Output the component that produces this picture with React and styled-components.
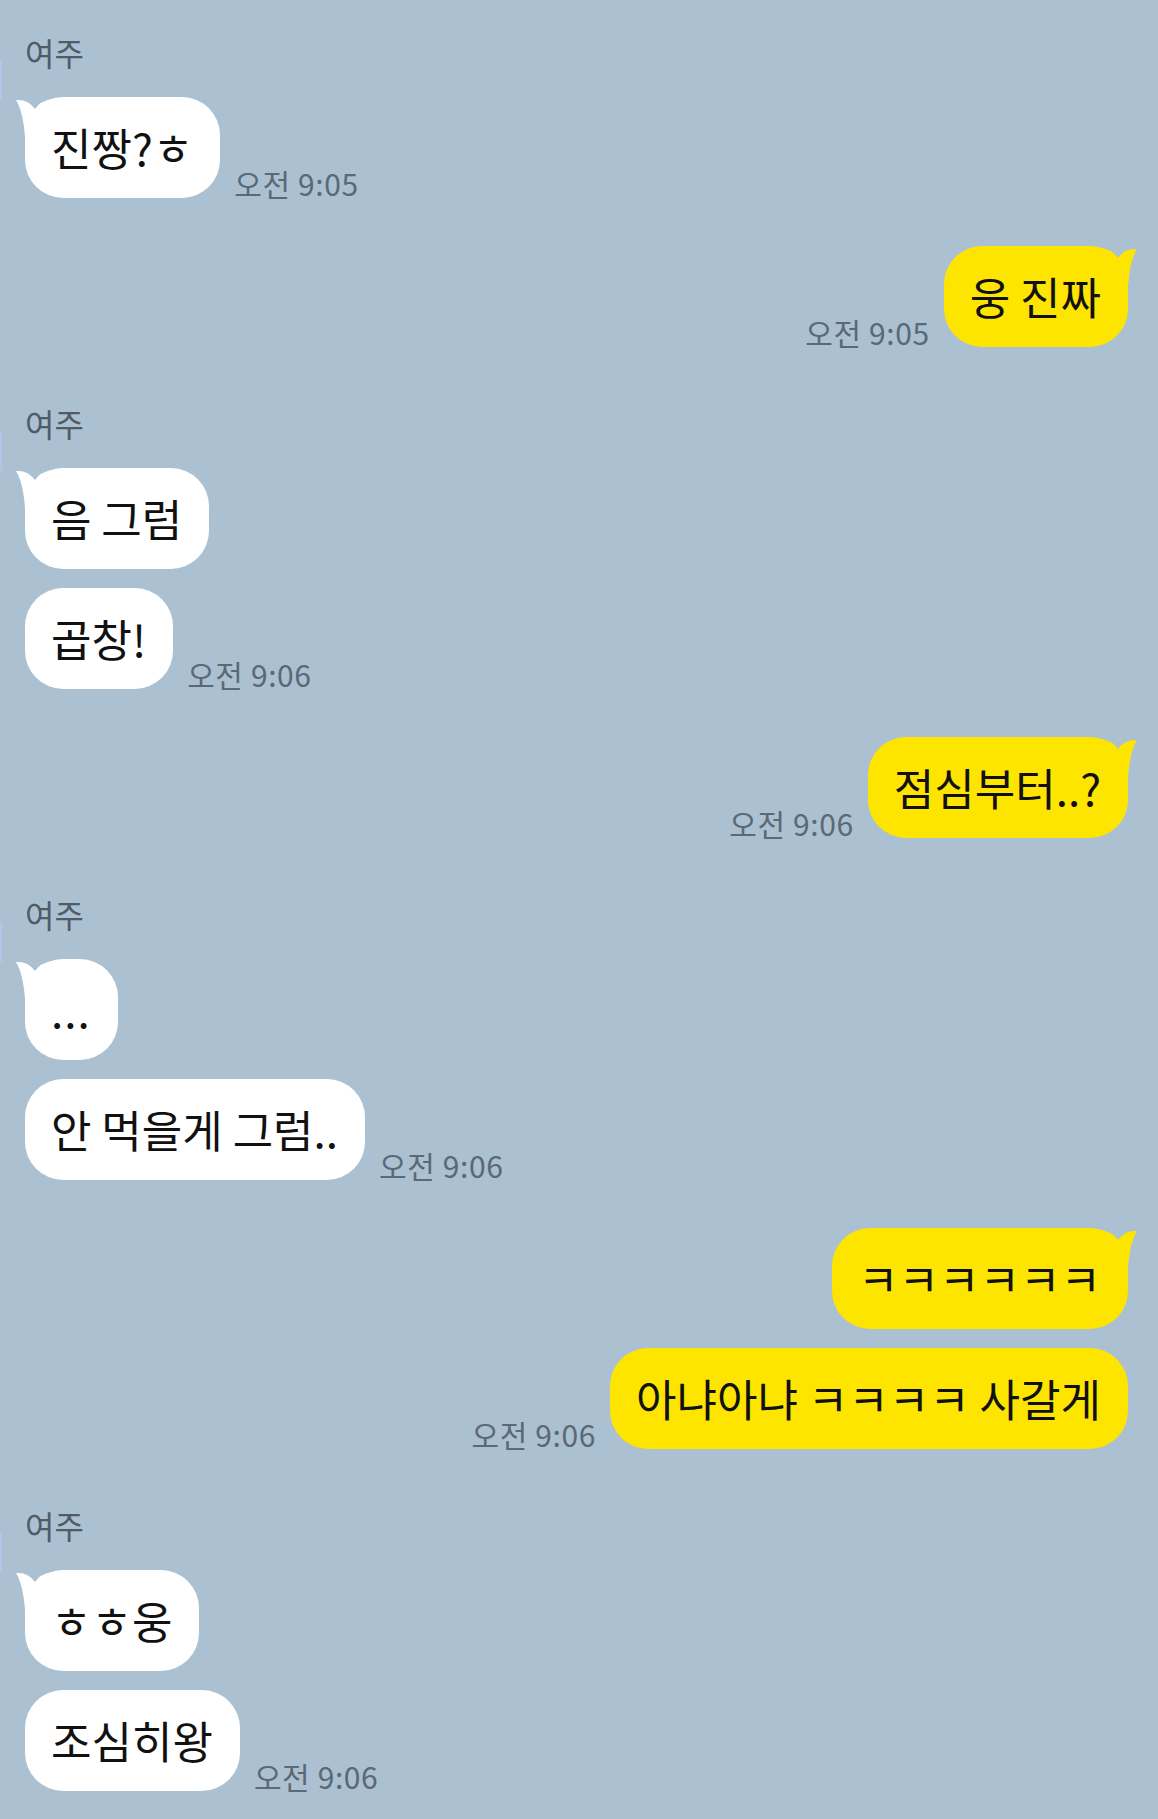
import styled, { createGlobalStyle } from "styled-components";

const GlobalStyle = createGlobalStyle`
  html, body {
    margin: 0;
    padding: 0;
    background: #abc1d1;
  }
  body {
    font-family: "Noto Sans CJK KR", "Noto Sans", sans-serif;
  }
`;

const Chat = styled.main`
  display: flex;
  flex-direction: column;
  min-height: 100vh;
  box-sizing: border-box;
  padding: 32px 30px 24px 25px;
`;

const Group = styled.section`
  position: relative;
  display: flex;
  flex-direction: column;
  align-items: ${({ $mine }) => ($mine ? "flex-end" : "flex-start")};
  margin-top: ${({ $mine }) => ($mine ? "48px" : "56px")};
  &:first-child {
    margin-top: 0;
  }
  ${({ $mine }) =>
    !$mine &&
    `
    &::before {
      content: "";
      position: absolute;
      left: -25px;
      top: 28px;
      width: 2px;
      height: 40px;
      background: #b7c2e6;
    }
  `}
`;

const Name = styled.div`
  font-size: 32px;
  line-height: 40px;
  color: #4f5b67;
  margin-bottom: 25px;
`;

const Stack = styled.div`
  display: flex;
  flex-direction: column;
  align-items: inherit;
  gap: 19px;
`;

const Row = styled.div`
  display: flex;
  flex-direction: ${({ $mine }) => ($mine ? "row-reverse" : "row")};
  align-items: flex-end;
  gap: 14px;
`;

const Bubble = styled.div`
  position: relative;
  background: ${({ $mine }) => ($mine ? "#fee500" : "#ffffff")};
  color: #111;
  border-radius: 38px;
  padding: 25px 27px 25px 26px;
  font-size: 44px;
  line-height: 51px;
  white-space: nowrap;
  letter-spacing: ${({ $spaced }) => ($spaced ? "1px" : "0")};
`;

const TailSvg = styled.svg`
  position: absolute;
  top: 0;
  ${({ $mine }) => ($mine ? "right: -9px;" : "left: -9px;")}
  width: 36px;
  height: 40px;
  transform: ${({ $mine }) => ($mine ? "scaleX(-1)" : "none")};
  fill: ${({ $mine }) => ($mine ? "#fee500" : "#ffffff")};
`;

const Time = styled.span`
  font-size: 30px;
  line-height: 30px;
  letter-spacing: 0.6px;
  color: #5b6876;
  margin-bottom: 0;
  white-space: nowrap;
`;

const Tail = ({ mine }) => (
  <TailSvg $mine={mine} viewBox="0 0 36 40">
    <path d="M0 3 Q12 2 19 12 Q24 4 36 2 L36 40 L9 40 Q7 14 0 3 Z" />
  </TailSvg>
);

const groups = [
  { name: "여주", messages: ["진짱?ㅎ"], time: "오전 9:05" },
  { mine: true, messages: ["웅 진짜"], time: "오전 9:05" },
  { name: "여주", messages: ["음 그럼", "곱창!"], time: "오전 9:06" },
  { mine: true, messages: ["점심부터..?"], time: "오전 9:06" },
  { name: "여주", messages: ["...", "안 먹을게 그럼.."], time: "오전 9:06" },
  { mine: true, messages: ["ㅋㅋㅋㅋㅋㅋ", "아냐아냐 ㅋㅋㅋㅋ 사갈게"], time: "오전 9:06" },
  { name: "여주", messages: ["ㅎㅎ웅", "조심히왕"], time: "오전 9:06" },
];

export default function App() {
  return (
    <>
      <GlobalStyle />
      <Chat>
        {groups.map((group, gi) => (
          <Group key={gi} $mine={group.mine}>
            {group.name && <Name>{group.name}</Name>}
            <Stack>
              {group.messages.map((text, mi) => {
                const last = mi === group.messages.length - 1;
                return (
                  <Row key={mi} $mine={group.mine}>
                    <Bubble $mine={group.mine} $spaced={text === "..."}>
                      {mi === 0 && <Tail mine={group.mine} />}
                      {text}
                    </Bubble>
                    {last && <Time>{group.time}</Time>}
                  </Row>
                );
              })}
            </Stack>
          </Group>
        ))}
      </Chat>
    </>
  );
}
